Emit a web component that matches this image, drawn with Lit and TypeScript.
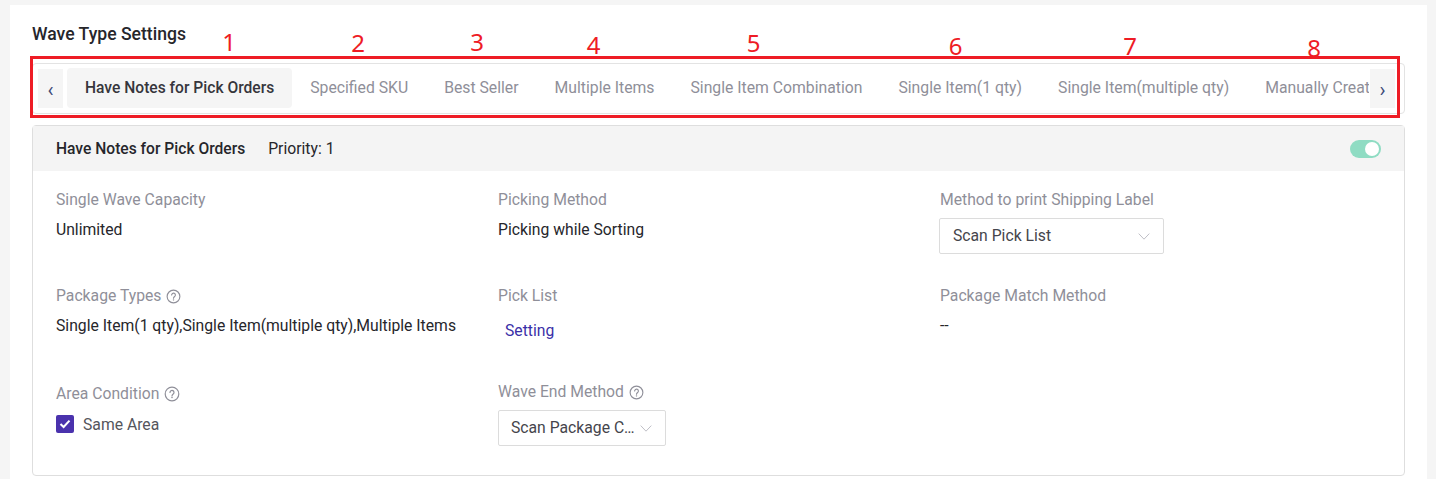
import { LitElement, html, css } from "lit";
import { customElement } from "lit/decorators.js";

const help = (size: number) => html`<svg class="help" width=${size} height=${size} viewBox="0 0 16 16" fill="none" stroke="#8f8f99" stroke-width="1.2"><circle cx="8" cy="8" r="6.8"></circle><path d="M6 6.4a2 2 0 1 1 3.2 1.6c-.8.6-1.2 1-1.2 1.9" stroke-linecap="round"></path><circle cx="8" cy="11.6" r=".5" fill="#8f8f99" stroke-width=".5"></circle></svg>`;
const chevron = html`<svg class="chev" width="12" height="7" viewBox="0 0 12 7" fill="none" stroke="#bfbfc6" stroke-width="1"><path d="M.7.6 6 6.2 11.3.6"></path></svg>`;

const NUMS: [string, number, number][] = [
  ["1", 229, 42], ["2", 358, 43], ["3", 477, 42], ["4", 593.5, 45],
  ["5", 753.5, 43], ["6", 955.5, 46], ["7", 1130, 46], ["8", 1314, 48],
];
const TABS = ["Have Notes for Pick Orders", "Specified SKU", "Best Seller", "Multiple Items", "Single Item Combination", "Single Item(1 qty)", "Single Item(multiple qty)", "Manually Created"];

@customElement("app-root")
export class AppRoot extends LitElement {
  static styles = css`
    :host { display: block; height: 479px; overflow: hidden; background: #f5f5f5; font-family: Roboto, "Liberation Sans", sans-serif; font-size: 15.72px; color: #26262b; position: relative; }
    .panel { margin: 5px 9px 0 10px; height: 474px; background: #fff; padding: 0 22px; box-sizing: border-box; }
    h2 { margin: 0; padding-top: 18px; height: 58px; box-sizing: border-box; font-size: 17.6px; line-height: 22px; font-weight: 500; color: #26262b; }
    .tabs { display: flex; align-items: flex-start; height: 51px; border: 1px solid #e3e3e3; border-radius: 4px; box-sizing: border-box; padding: 4px 9px 0 5px; gap: 4px; margin-bottom: 11px; }
    .arrow { flex: none; width: 25px; height: 39px; margin-top: 1px; background: #f5f5f5; display: flex; align-items: center; justify-content: center; color: #3c4a75; font-size: 20px; line-height: 1; padding-top: 2px; box-sizing: border-box; }
    .strip { flex: 1; min-width: 0; display: flex; overflow: hidden; white-space: nowrap; margin-right: -3px; }
    .tab { flex: none; height: 40px; line-height: 40px; padding: 0 18px; color: #8f8f99; font-size: 15.76px; border-radius: 4px; }
    .tab.on { background: #f5f5f5; color: #36363c; font-weight: 500; font-size: 15.6px; }
    .arrow.r { position: relative; z-index: 1; }
    .card { border: 1px solid #dedede; border-radius: 4px; height: 351px; box-sizing: border-box; }
    .head { height: 45px; background: #f4f4f4; display: flex; align-items: center; padding: 0 23px; }
    .head b { font-weight: 500; font-size: 15.6px; margin-right: 23px; }
    .head .sp { flex: 1; }
    .toggle { width: 31px; height: 18px; border-radius: 9px; background: #8fdcc3; position: relative; }
    .toggle::after { content: ""; position: absolute; right: 2px; top: 2px; width: 14px; height: 14px; border-radius: 50%; background: #fff; }
    .grid { display: grid; grid-template-columns: 442px 442px 1fr; grid-template-rows: 96px 98px auto; padding: 19px 23px 0; }
    .label { display: flex; align-items: center; gap: 5px; height: 20px; color: #8f8f99; line-height: 20px; }
    .label.up { margin-top: -2px; }
    .help { flex: none; }
    .value { margin-top: 10px; line-height: 20px; color: #26262b; }
    .link { margin-top: 15px; padding-left: 7px; line-height: 20px; color: #3a2fa8; }
    .select { margin-top: 8px; height: 36px; border: 1px solid #dcdcdc; border-radius: 2px; box-sizing: border-box; display: flex; align-items: center; justify-content: space-between; padding: 0 13px; color: #45454c; white-space: nowrap; }
    .select span { margin-top: -2px; }
    .s1 { width: 225px; margin-left: -1px; }
    .s2 { width: 168px; padding-left: 12px; }
    .check { display: flex; align-items: center; gap: 9px; margin-top: 10px; height: 20px; color: #55555c; }
    .box { width: 18px; height: 18px; border-radius: 2px; background: #4a32ad; display: flex; align-items: center; justify-content: center; }
    .mark { position: absolute; left: 30px; top: 56px; width: 1370px; height: 62px; border: 3px solid #ee1c25; box-sizing: border-box; pointer-events: none; }
    .num { position: absolute; transform: translate(-50%, -50%); font-family: "Noto Sans", sans-serif; font-size: 24px; line-height: 28px; color: #ee1c25; }
  `;

  render() {
    return html`
      <div class="panel">
        <h2>Wave Type Settings</h2>
        <div class="tabs">
          <div class="arrow">‹</div>
          <div class="strip">${TABS.map((t, i) => html`<div class="tab ${i === 0 ? "on" : ""}">${t}</div>`)}</div>
          <div class="arrow r">›</div>
        </div>
        <div class="card">
          <div class="head"><b>Have Notes for Pick Orders</b><span>Priority: 1</span><span class="sp"></span><div class="toggle"></div></div>
          <div class="grid">
            <div><div class="label">Single Wave Capacity</div><div class="value">Unlimited</div></div>
            <div><div class="label">Picking Method</div><div class="value">Picking while Sorting</div></div>
            <div><div class="label">Method to print Shipping Label</div><div class="select s1"><span>Scan Pick List</span>${chevron}</div></div>
            <div><div class="label">Package Types ${help(15)}</div><div class="value">Single Item(1 qty),Single Item(multiple qty),Multiple Items</div></div>
            <div><div class="label">Pick List</div><div class="link">Setting</div></div>
            <div><div class="label">Package Match Method</div><div class="value">--</div></div>
            <div><div class="label">Area Condition ${help(16)}</div><div class="check"><div class="box"><svg width="12" height="10" viewBox="0 0 12 10" fill="none" stroke="#fff" stroke-width="2"><path d="M1.5 5 4.6 8 10.5 1.6"></path></svg></div>Same Area</div></div>
            <div><div class="label up">Wave End Method ${help(15)}</div><div class="select s2"><span>Scan Package C…</span>${chevron}</div></div>
            <div></div>
          </div>
        </div>
      </div>
      <div class="mark"></div>
      ${NUMS.map(([n, x, y]) => html`<div class="num" style="left:${x}px;top:${y}px">${n}</div>`)}
    `;
  }
}
